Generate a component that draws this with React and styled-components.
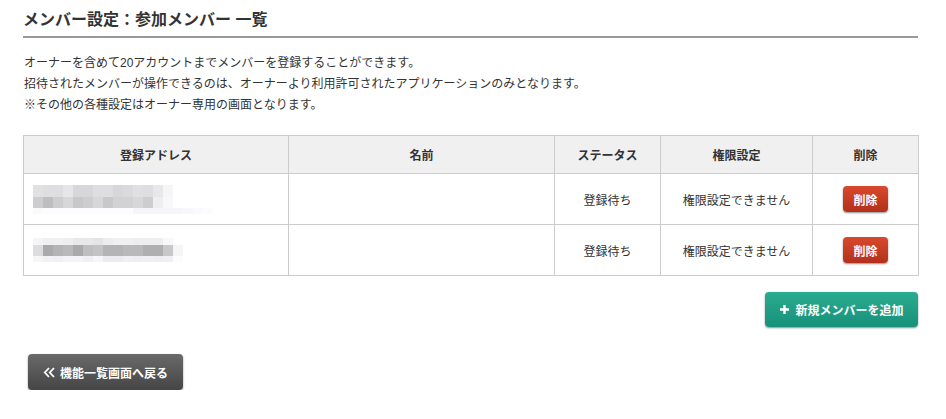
import React from 'react';
import styled, { createGlobalStyle } from 'styled-components';

const GlobalStyle = createGlobalStyle`
  html, body {
    margin: 0;
    padding: 0;
    background: #fff;
  }
  body {
    font-family: "Liberation Sans", "Noto Sans CJK JP", sans-serif;
    color: #333;
    font-size: 12px;
  }
`;

const Page = styled.div`
  width: 895px;
  padding: 9px 0 0 23px;
`;

const Title = styled.h2`
  margin: 0;
  font-size: 16px;
  font-weight: bold;
  line-height: 22px;
  padding-bottom: 5px;
  border-bottom: 2px solid #999;
  color: #333;
`;

const Lead = styled.div`
  margin-top: 15px;
  line-height: 21px;
  font-size: 12px;
  padding-left: 1px;
`;

const Table = styled.table`
  margin-top: 19px;
  width: 895px;
  border-collapse: collapse;
  table-layout: fixed;
  font-size: 12px;
`;

const Th = styled.th`
  background: #f0f0f0;
  border: 1px solid #ccc;
  height: 37px;
  font-weight: bold;
  text-align: center;
  padding: 0;
`;

const Td = styled.td`
  border: 1px solid #ccc;
  height: 50px;
  text-align: ${p => (p.$left ? 'left' : 'center')};
  padding: 0 ${p => (p.$left ? '9px' : '0')};
  vertical-align: middle;
`;

// pixelated (mosaic) address, as in the screenshot
const Mosaic = styled.div`
  display: flex;
  flex-direction: column;
`;

const MosaicRow = styled.div`
  display: flex;
  height: ${p => p.$h}px;
`;

const Cell = styled.span`
  display: block;
  width: 10px;
  height: 100%;
`;

const shade = v => `rgb(${v}, ${v}, ${v + 2})`;

const mosaics = [
  [
    { h: 12, cells: [225, 222, 222, 230, 215, 215, 222, 222, 215, 218, 224, 222, 232, 246] },
    { h: 11, cells: [205, 190, 205, 215, 200, 205, 215, 200, 210, 210, 215, 205, 238, 248] },
    { h: 6, cells: [250, 252, 252, 252, 252, 252, 252, 252, 252, 252, 246, 246, 246, 246, 246, 248, 250, 252] },
  ],
  [
    { h: 7, cells: [245, 240, 240, 238, 232, 232, 228, 236, 240, 240, 238, 238, 238, 248] },
    { h: 11, cells: [220, 170, 180, 185, 170, 190, 195, 180, 180, 185, 185, 175, 175, 200, 245] },
    { h: 6, cells: [246, 242, 240, 244, 244, 240, 246, 236, 236, 240, 238, 240, 238, 240, 252] },
  ],
];

const DangerButton = styled.button`
  width: 45px;
  height: 26px;
  border: none;
  border-radius: 4px;
  background: linear-gradient(#d8492d, #b3301b);
  box-shadow: 0 1px 2px rgba(0, 0, 0, 0.45);
  color: #fff;
  font-family: inherit;
  font-size: 12px;
  font-weight: bold;
  padding: 0;
  cursor: pointer;
`;

const Actions = styled.div`
  display: flex;
  justify-content: flex-end;
  margin-top: 16px;
`;

const ActionButton = styled.button`
  display: flex;
  align-items: center;
  justify-content: center;
  gap: 5px;
  width: ${p => p.$width}px;
  height: ${p => p.$height}px;
  border: none;
  border-radius: 4px;
  background: ${p => p.$bg};
  box-shadow: 0 1px 2px rgba(0, 0, 0, 0.45);
  color: #fff;
  font-family: inherit;
  font-size: 12px;
  font-weight: bold;
  padding: 0;
  cursor: pointer;
`;

const Footer = styled.div`
  margin-top: 27px;
  padding-left: 5px;
`;

const PlusIcon = () => (
  <svg width="11" height="11" viewBox="0 0 11 11">
    <path d="M5.5 1v9M1 5.5h9" stroke="#fff" strokeWidth="2.4" />
  </svg>
);

const BackIcon = () => (
  <svg width="12" height="11" viewBox="0 0 12 11">
    <path d="M6 1L1.8 5.5 6 10M11 1L6.8 5.5 11 10" stroke="#fff" strokeWidth="1.8" fill="none" />
  </svg>
);

export default function App() {
  return (
    <>
      <GlobalStyle />
      <Page>
        <Title>メンバー設定：参加メンバー 一覧</Title>
        <Lead>
          オーナーを含めて20アカウントまでメンバーを登録することができます。<br />
          招待されたメンバーが操作できるのは、オーナーより利用許可されたアプリケーションのみとなります。<br />
          ※その他の各種設定はオーナー専用の画面となります。
        </Lead>
        <Table>
          <colgroup>
            <col style={{ width: 265 }} />
            <col style={{ width: 266 }} />
            <col style={{ width: 106 }} />
            <col style={{ width: 152 }} />
            <col style={{ width: 106 }} />
          </colgroup>
          <thead>
            <tr>
              <Th>登録アドレス</Th>
              <Th>名前</Th>
              <Th>ステータス</Th>
              <Th>権限設定</Th>
              <Th>削除</Th>
            </tr>
          </thead>
          <tbody>
            {mosaics.map((rows, i) => (
              <tr key={i}>
                <Td $left>
                  <Mosaic>
                    {rows.map((r, j) => (
                      <MosaicRow key={j} $h={r.h}>
                        {r.cells.map((v, k) => (
                          <Cell key={k} style={{ background: shade(v) }} />
                        ))}
                      </MosaicRow>
                    ))}
                  </Mosaic>
                </Td>
                <Td></Td>
                <Td>登録待ち</Td>
                <Td>権限設定できません</Td>
                <Td>
                  <DangerButton>削除</DangerButton>
                </Td>
              </tr>
            ))}
          </tbody>
        </Table>
        <Actions>
          <ActionButton $width={153} $height={35} $bg="linear-gradient(#2aac8f, #17917a)">
            <PlusIcon />
            新規メンバーを追加
          </ActionButton>
        </Actions>
        <Footer>
          <ActionButton $width={155} $height={36} $bg="linear-gradient(#6a6a6a, #454545)">
            <BackIcon />
            機能一覧画面へ戻る
          </ActionButton>
        </Footer>
      </Page>
    </>
  );
}
